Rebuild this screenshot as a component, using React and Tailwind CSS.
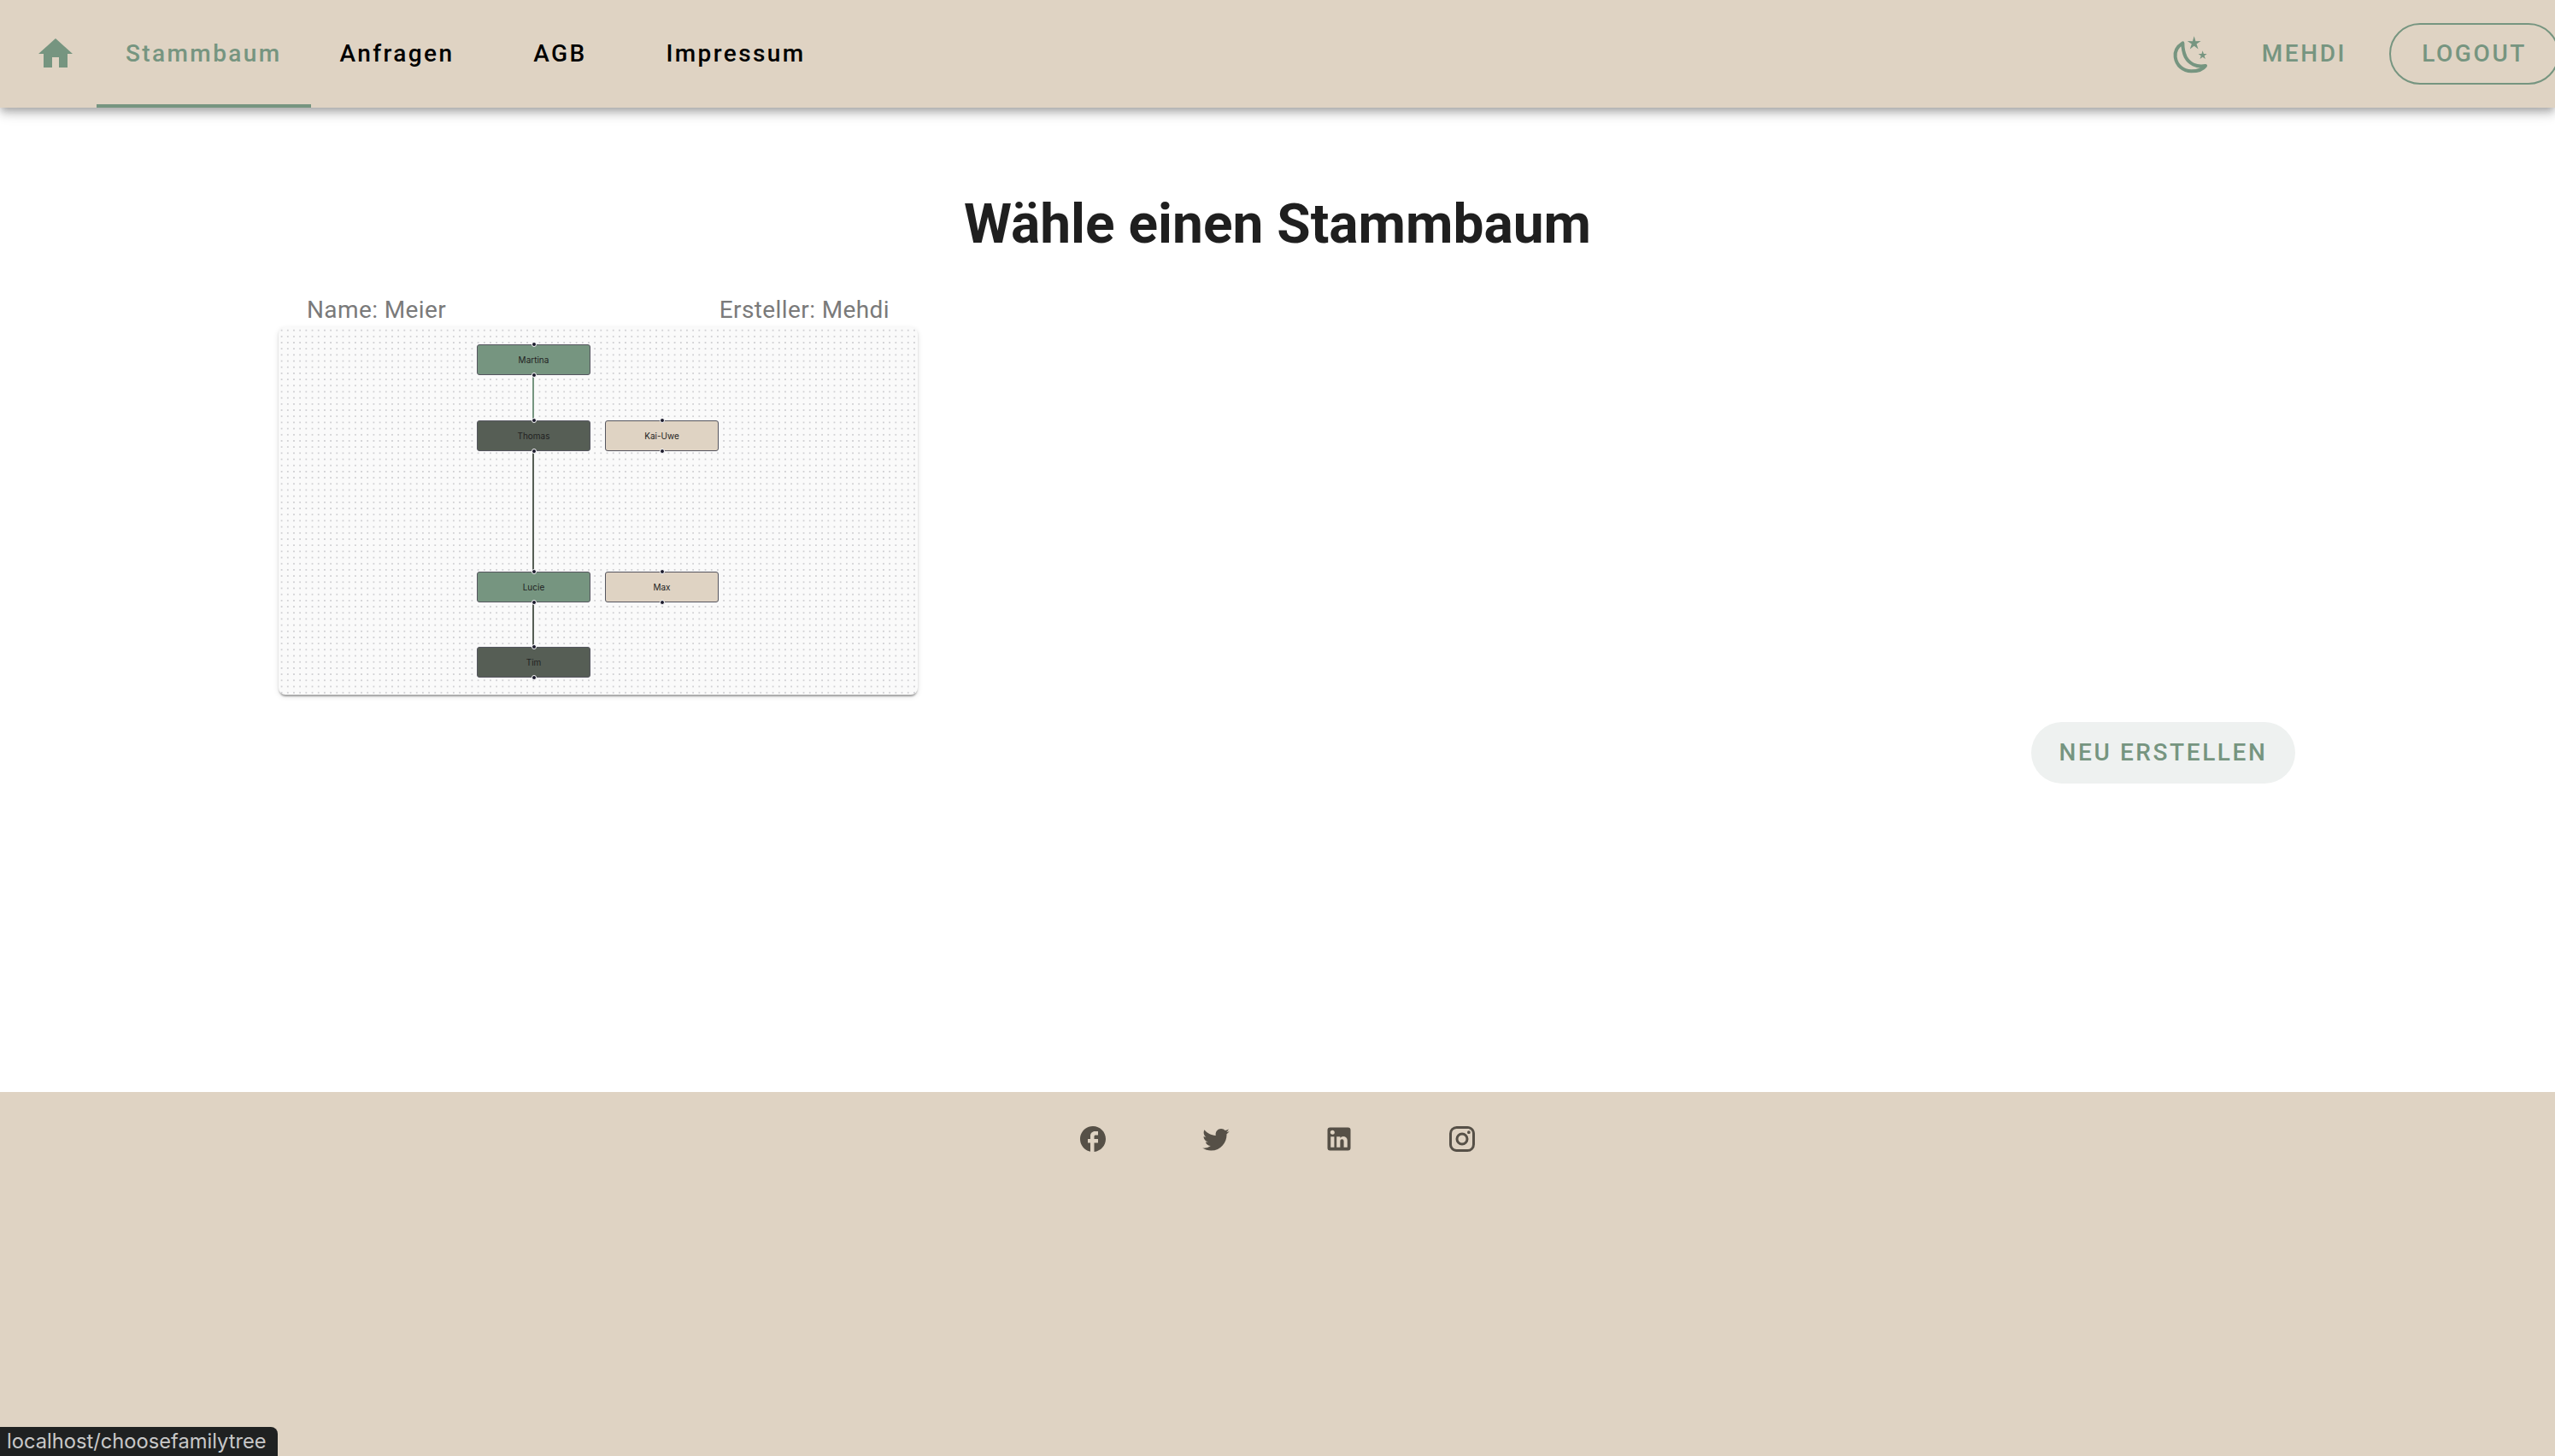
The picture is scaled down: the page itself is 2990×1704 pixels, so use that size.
import React from 'react';

const tabs = [
  { label: 'Stammbaum', active: true },
  { label: 'Anfragen' },
  { label: 'AGB', wide: true },
  { label: 'Impressum' },
];

const nodes = [
  { name: 'Martina', left: 232, top: 20, tone: 'bg-[#769580]' },
  { name: 'Thomas', left: 232, top: 109, tone: 'bg-[#565e55]' },
  { name: 'Kai-Uwe', left: 382, top: 109, tone: 'bg-[#dfd3c3]' },
  { name: 'Lucie', left: 232, top: 286, tone: 'bg-[#769580]' },
  { name: 'Max', left: 382, top: 286, tone: 'bg-[#dfd3c3]' },
  { name: 'Tim', left: 232, top: 374, tone: 'bg-[#565e55]' },
];

const socials = [
  'M22 12c0-5.52-4.48-10-10-10S2 6.48 2 12c0 4.84 3.44 8.87 8 9.8V15H8v-3h2V9.5C10 7.57 11.57 6 13.5 6H16v3h-2c-.55 0-1 .45-1 1v2h3v3h-3v6.95c5.05-.5 9-4.76 9-9.95z',
  'M22.46 6c-.77.35-1.6.58-2.46.69.88-.53 1.56-1.37 1.88-2.38-.83.5-1.75.85-2.72 1.05C18.37 4.5 17.26 4 16 4c-2.35 0-4.27 1.92-4.27 4.29 0 .34.04.67.11.98C8.28 9.09 5.11 7.38 3 4.79c-.37.63-.58 1.37-.58 2.15 0 1.49.75 2.81 1.91 3.56-.71 0-1.37-.2-1.95-.5v.03c0 2.08 1.48 3.82 3.44 4.21a4.22 4.22 0 0 1-1.93.07 4.28 4.28 0 0 0 4 2.98 8.521 8.521 0 0 1-5.33 1.84c-.34 0-.68-.02-1.02-.06C3.44 20.29 5.7 21 8.12 21 16 21 20.33 14.46 20.33 8.79c0-.19 0-.37-.01-.56.84-.6 1.56-1.36 2.14-2.23z',
  'M19 3a2 2 0 0 1 2 2v14a2 2 0 0 1-2 2H5a2 2 0 0 1-2-2V5a2 2 0 0 1 2-2h14m-.5 15.5v-5.3a3.26 3.26 0 0 0-3.26-3.26c-.85 0-1.84.52-2.32 1.3v-1.11h-2.79v8.37h2.79v-4.93c0-.77.62-1.4 1.39-1.4a1.4 1.4 0 0 1 1.4 1.4v4.93h2.79M6.88 8.56a1.68 1.68 0 0 0 1.68-1.68c0-.93-.75-1.69-1.68-1.69a1.69 1.69 0 0 0-1.69 1.69c0 .93.76 1.68 1.69 1.68m1.39 9.94v-8.37H5.5v8.37h2.77z',
  'M7.8 2h8.4C19.4 2 22 4.6 22 7.8v8.4a5.8 5.8 0 0 1-5.8 5.8H7.8C4.6 22 2 19.4 2 16.2V7.8A5.8 5.8 0 0 1 7.8 2m-.2 2A3.6 3.6 0 0 0 4 7.6v8.8C4 18.39 5.61 20 7.6 20h8.8a3.6 3.6 0 0 0 3.6-3.6V7.6C20 5.61 18.39 4 16.4 4H7.6m9.65 1.5a1.25 1.25 0 0 1 1.25 1.25A1.25 1.25 0 0 1 17.25 8 1.25 1.25 0 0 1 16 6.75a1.25 1.25 0 0 1 1.25-1.25M12 7a5 5 0 0 1 5 5 5 5 0 0 1-5 5 5 5 0 0 1-5-5 5 5 0 0 1 5-5m0 2a3 3 0 0 0-3 3 3 3 0 0 0 3 3 3 3 0 0 0 3-3 3 3 0 0 0-3-3z',
];

function MoonIcon() {
  return (
    <svg viewBox="0 0 180 168" className="mr-[52px] h-[56px] w-[60px]">
      <path
        d="M58 46C36 60 30 80 32 95C36 125 60 145 88 145C108 145 128 140 138 126C105 132 80 118 68 95C60 78 58 60 58 46Z"
        fill="none"
        stroke="#769580"
        strokeWidth="12"
        strokeLinejoin="round"
      />
      <polygon
        fill="#769580"
        points="98,22 103.3,39.7 121.8,39.3 106.6,49.8 112.7,67.2 98,56 83.3,67.2 89.4,49.8 74.2,39.3 92.7,39.7"
      />
      <polygon
        fill="#769580"
        points="128,73 131.7,83.9 143.2,84.1 134,90.9 137.4,102 128,95.3 118.6,102 122,90.9 112.8,84.1 124.3,83.9"
      />
    </svg>
  );
}

function Handle({ className }) {
  return <span className={`absolute left-1/2 -ml-[3px] h-[6px] w-[6px] rounded-full border border-white bg-[#1a192b] ${className}`} />;
}

function TreeNode({ node }) {
  return (
    <div
      style={{ left: node.left, top: node.top }}
      className={`absolute flex h-[36px] w-[133px] items-center justify-center rounded-[3px] border-[1.5px] border-[#55555f] text-[10px] text-[#222] font-['Inter',sans-serif] ${node.tone}`}
    >
      <Handle className="-top-[4px]" />
      {node.name}
      <Handle className="-bottom-[4px]" />
    </div>
  );
}

export default function App() {
  return (
    <div className="relative flex h-[1704px] w-[2990px] flex-col overflow-hidden bg-white font-['Roboto',sans-serif]">
      <header className="relative z-10 flex h-[126px] shrink-0 items-center justify-between bg-[#dfd3c3] shadow-[0_4px_8px_-2px_rgba(0,0,0,0.2),0_8px_10px_0_rgba(0,0,0,0.14),0_2px_20px_0_rgba(0,0,0,0.12)]">
        <nav className="flex h-full items-stretch pl-[41px]">
          <div className="mr-[24px] flex items-center">
            <svg viewBox="0 0 24 24" className="h-[48px] w-[48px] fill-[#769580]">
              <path d="M10 20v-6h4v6h5v-8h3L12 3 2 12h3v8z" />
            </svg>
          </div>
          {tabs.map((tab) => (
            <div
              key={tab.label}
              className={`flex items-center justify-center border-b-[4px] border-t-[4px] border-t-transparent text-[28px] font-[480] tracking-[2.4px] ${
                tab.active ? 'border-b-[#769580] text-[#769580]' : 'border-b-transparent text-black'
              } ${tab.wide ? 'w-[180px]' : 'px-[34px]'}`}
            >
              {tab.label}
            </div>
          ))}
        </nav>
        <div className="-mr-[5px] flex items-center">
          <MoonIcon />
          <span className="mr-[50px] text-[28px] font-[480] tracking-[2.6px] text-[#769580]">MEHDI</span>
          <button className="h-[72px] rounded-full border-2 border-[#769580] px-[36px] text-[28px] font-[480] tracking-[2.6px] text-[#769580]">
            LOGOUT
          </button>
        </div>
      </header>

      <main className="flex flex-1 flex-col px-[304px] pt-[97px]">
        <h1 className="text-center text-[64px] leading-[80px] font-bold text-[#1f1f1f]">Wähle einen Stammbaum</h1>
        <div className="mt-[43px] ml-[22px] w-[748px]">
          <div className="flex justify-between px-[33px] text-[28px] leading-[33px] tracking-[0.4px] text-[#7a7a7a]">
            <span>Name: Meier</span>
            <span>Ersteller: Mehdi</span>
          </div>
          <div className="relative mt-[4px] h-[430px] overflow-hidden rounded-[8px] bg-[#fafafa] bg-[radial-gradient(circle,#c6c6ca_0.5px,transparent_1.2px)] bg-[size:7.2px_7.2px] shadow-[0_4px_2px_-2px_rgba(0,0,0,0.2),0_2px_2px_0_rgba(0,0,0,0.14),0_2px_6px_0_rgba(0,0,0,0.12)]">
            <svg className="absolute inset-0 h-full w-full" fill="none">
              <path d="M298 56V109" stroke="#769580" strokeWidth="2" />
              <path d="M298 145V286" stroke="#565e55" strokeWidth="2" />
              <path d="M298 322V374" stroke="#565e55" strokeWidth="2" />
            </svg>
            {nodes.map((node) => (
              <TreeNode key={node.name} node={node} />
            ))}
          </div>
        </div>
        <div className="mt-[32px] flex justify-end">
          <button className="h-[72px] w-[309px] rounded-full bg-[#eef1f0] text-[28px] font-[480] tracking-[2.6px] text-[#769580]">
            NEU ERSTELLEN
          </button>
        </div>
      </main>

      <footer className="flex h-[426px] shrink-0 justify-center gap-[108px] bg-[#dfd3c3] pt-[37px]">
        {socials.map((d, i) => (
          <svg key={i} viewBox="0 0 24 24" className="h-[36px] w-[36px] fill-[#565047]">
            <path d={d} />
          </svg>
        ))}
      </footer>

      <div className="absolute bottom-0 left-0 flex h-[34px] w-[325px] items-center rounded-tr-[8px] bg-[#1f2121] pl-[8px] font-['Inter',sans-serif] text-[23.7px] text-[#c8c8c8]">
        localhost/choosefamilytree
      </div>
    </div>
  );
}
